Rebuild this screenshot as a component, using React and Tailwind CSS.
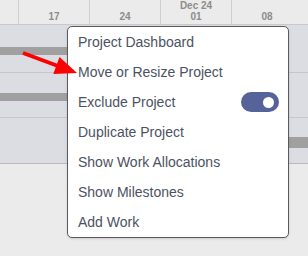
import React from 'react';

const weeks = [
  { top: '', label: '17' },
  { top: '', label: '24' },
  { top: 'Dec 24', label: '01' },
  { top: '', label: '08' },
];

const items = [
  'Project Dashboard',
  'Move or Resize Project',
  'Exclude Project',
  'Duplicate Project',
  'Show Work Allocations',
  'Show Milestones',
  'Add Work',
];

// timeline header with week columns
const Header = () => (
  <div className="flex h-[25px] border-b border-[#c9c9c9] bg-[#ebebeb]">
    <div className="w-[18px] shrink-0" />
    {weeks.map((w) => (
      <div
        key={w.label}
        className="flex w-[71px] shrink-0 flex-col items-center border-l border-[#cfcfcf] text-[10px] font-bold leading-[11px] text-[#8c8c8c]"
      >
        <span className="h-[11px]">{w.top}</span>
        <span>{w.label}</span>
      </div>
    ))}
  </div>
);

const Toggle = () => (
  <div className="flex h-[20px] w-[38px] items-center justify-end rounded-full bg-[#56639a] pr-[5px]">
    <div className="h-[11px] w-[11px] rounded-full bg-white" />
  </div>
);

const Menu = () => (
  <div className="absolute left-[67px] top-[26px] w-[222px] rounded-[5px] border border-[#5a5a5a] bg-white shadow-sm">
    {items.map((item) => (
      <div
        key={item}
        className="flex h-[30px] items-center justify-between pl-[10px] pr-[9px] text-[14px] text-[#4b5262]"
      >
        <span>{item}</span>
        {item === 'Exclude Project' && <Toggle />}
      </div>
    ))}
  </div>
);

const Arrow = () => (
  <svg className="absolute left-0 top-0" width="308" height="256" viewBox="0 0 308 256">
    <line x1="23" y1="53" x2="58" y2="66" stroke="#ff0000" strokeWidth="4" />
    <polygon points="77,73 59.5,57 53.3,74" fill="#ff0000" />
  </svg>
);

export default function App() {
  return (
    <div
      className="relative flex h-[256px] w-[308px] flex-col overflow-hidden bg-[#ebebeb]"
      style={{ fontFamily: '"Liberation Sans", Arial, sans-serif' }}
    >
      <Header />
      <div className="h-[48px] border-b border-[#c6c7cc] bg-[#dcdde2] pt-[22px]">
        <div className="h-[8px] w-[150px] bg-[#a0a0a0]" />
      </div>
      <div className="h-[45px] border-b border-[#c6c7cc] bg-[#dcdde2] pt-[20px]">
        <div className="h-[8px] w-[150px] bg-[#a0a0a0]" />
      </div>
      <div className="h-[46px] border-b border-[#bcbcbc] bg-[#dcdde2] pt-[19px]">
        <div className="ml-[250px] h-[11px] bg-[#a0a0a0]" />
      </div>
      <div className="flex-1" />
      <Menu />
      <Arrow />
    </div>
  );
}
